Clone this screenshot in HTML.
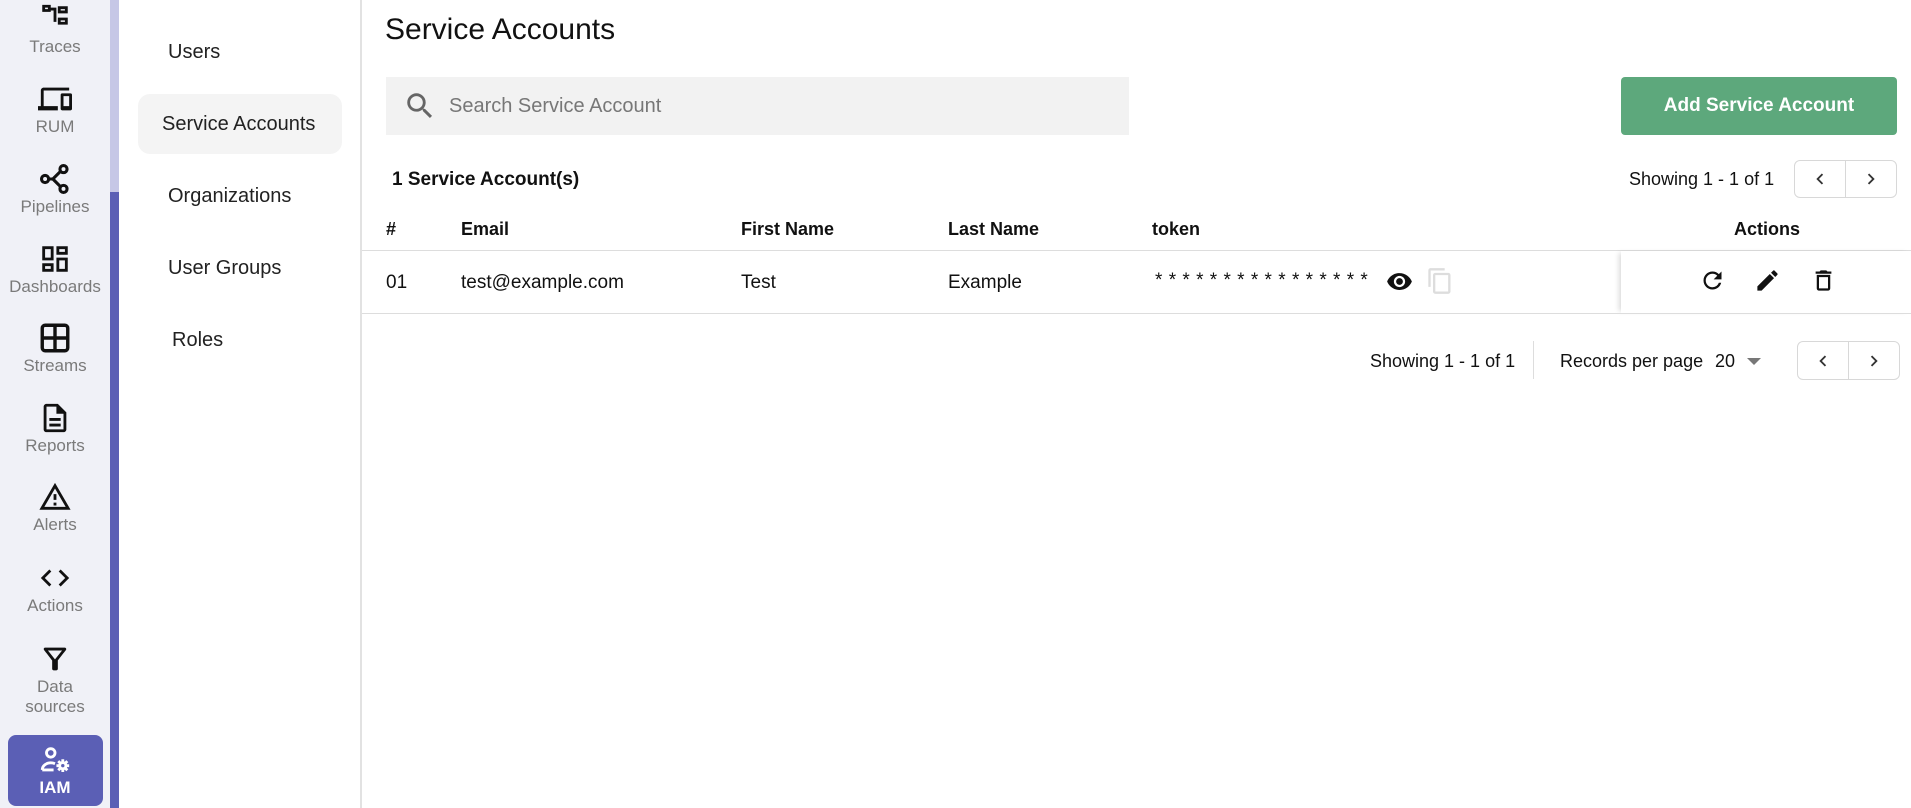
<!DOCTYPE html>
<html><head><meta charset="utf-8"><style>
*{margin:0;padding:0;box-sizing:border-box}
body{width:1911px;height:808px;overflow:hidden;background:#fff;font-family:"Liberation Sans",sans-serif;color:#111;position:relative}
.abs{position:absolute}
.rail{left:0;top:0;width:110px;height:808px;background:#f0f1f7}
.sb1{left:110px;top:0;width:9px;height:192px;background:#c6c7e6}
.sb2{left:110px;top:192px;width:9px;height:616px;background:#5b5fb5}
.ri{position:absolute;left:0;width:110px;text-align:center;color:#7a7a7a;font-size:17px;line-height:20px}
.ri svg{display:block;margin:0 auto 1px;width:34px;height:34px}
.sub{left:119px;top:0;width:243px;height:808px;border-right:2px solid #e2e2e2}
.si{position:absolute;font-size:20px;color:#222}
.th{position:absolute;top:219px;font-size:18px;font-weight:bold}
.td{position:absolute;top:272px;font-size:19px}
.pg{position:absolute;border:1px solid #d8d8d8;border-radius:6px;display:flex}
.pg div{flex:1;display:flex;align-items:center;justify-content:center}
.pg div:first-child{border-right:1px solid #d8d8d8}
</style></head><body>
<div class="abs rail"></div>
<div class="abs sb1"></div><div class="abs sb2"></div>

<div class="ri" style="top:2px"><svg viewBox="0 0 24 24"><path fill="#111" d="M3 2h6v5H3zM5 4v1h2V4zM14 3h7v5h-7zM16 5v1h3V5zM14 11h7v5h-7zM16 13v1h3v-1zM9 4h3v2H9zM11 4h2v10h-2z"/></svg>Traces</div>
<div class="ri" style="top:82px"><svg viewBox="0 0 24 24"><path fill="#111" d="M4 6h18V4H4c-1.1 0-2 .9-2 2v11H0v3h14v-3H4V6zm19 2h-6c-.55 0-1 .45-1 1v10c0 .55.45 1 1 1h6c.55 0 1-.45 1-1V9c0-.55-.45-1-1-1zm-1 9h-4v-7h4v7z"/></svg>RUM</div>
<div class="ri" style="top:162px"><svg viewBox="0 0 24 24"><g fill="none" stroke="#111" stroke-width="2.2"><circle cx="5" cy="12" r="2.5"/><circle cx="18" cy="5" r="2.5"/><circle cx="18" cy="19" r="2.5"/><path d="M7.5 12h3l5.5-5.5M10.5 12l5.5 5.5"/></g></svg>Pipelines</div>
<div class="ri" style="top:242px"><svg viewBox="0 0 24 24"><path fill="#111" d="M19 5v2h-4V5h4M9 5v6H5V5h4m10 8v6h-4v-6h4M9 17v2H5v-2h4M21 3h-8v6h8V3zM11 3H3v10h8V3zm10 8h-8v10h8V11zm-10 4H3v6h8v-6z"/></svg>Dashboards</div>
<div class="ri" style="top:321px"><svg viewBox="0 0 24 24"><g fill="none" stroke="#111" stroke-width="2.4"><rect x="3" y="3" width="18" height="18" rx="2"/><path d="M12 3v18M3 12h18"/></g></svg>Streams</div>
<div class="ri" style="top:401px"><svg viewBox="0 0 24 24"><path fill="#111" d="M8 16h8v2H8zm0-4h8v2H8zm6-10H6c-1.1 0-2 .9-2 2v16c0 1.1.89 2 1.99 2H18c1.1 0 2-.9 2-2V8l-6-6zm4 18H6V4h7v5h5v11z"/></svg>Reports</div>
<div class="ri" style="top:480px"><svg viewBox="0 0 24 24"><path fill="#111" d="M1 21h22L12 2 1 21zm3.47-2L12 5.99 19.53 19H4.47zM11 16h2v2h-2zm0-6h2v4h-2z"/></svg>Alerts</div>
<div class="ri" style="top:561px"><svg viewBox="0 0 24 24"><path fill="#111" d="M9.4 16.6L4.8 12l4.6-4.6L8 6l-6 6 6 6 1.4-1.4zm5.2 0l4.6-4.6-4.6-4.6L16 6l6 6-6 6-1.4-1.4z"/></svg>Actions</div>
<div class="ri" style="top:642px"><svg viewBox="0 0 24 24"><path fill="#111" d="M7 6h10l-5.01 6.3L7 6zm-2.75-.39C6.27 8.2 10 13 10 13v6c0 .55.45 1 1 1h2c.55 0 1-.45 1-1v-6s3.72-4.8 5.74-7.39A.998.998 0 0018.95 4H5.04c-.83 0-1.3.95-.79 1.61z"/></svg>Data<br>sources</div>
<div class="abs" style="left:8px;top:735px;width:95px;height:71px;background:#5b5fb5;border-radius:8px"></div>
<div class="ri" style="top:743px;color:#fff;font-weight:bold"><svg viewBox="0 0 24 24"><g fill="none" stroke="#fff" stroke-width="2"><circle cx="9" cy="7" r="3"/><path d="M3 19c0-3 3-5 6-5 1 0 2 .2 3 .6M3 19h8"/><circle cx="17.5" cy="16" r="2.2"/><path d="M17.5 11.5v2M17.5 18.5v2M13 16h2M20 16h2M14.3 12.8l1.4 1.4M19.3 17.8l1.4 1.4M14.3 19.2l1.4-1.4M19.3 14.2l1.4-1.4"/></g></svg>IAM</div>

<div class="abs sub"></div>
<div class="si" style="left:168px;top:41px">Users</div>
<div class="abs" style="left:138px;top:94px;width:204px;height:60px;background:#f4f4f4;border-radius:12px"></div>
<div class="si" style="left:162px;top:113px">Service Accounts</div>
<div class="si" style="left:168px;top:185px">Organizations</div>
<div class="si" style="left:168px;top:257px">User Groups</div>
<div class="si" style="left:172px;top:329px">Roles</div>

<div class="abs" style="left:385px;top:13px;font-size:30px">Service Accounts</div>
<div class="abs" style="left:386px;top:77px;width:743px;height:58px;background:#f2f2f2"></div>
<svg class="abs" style="left:403px;top:89px" width="34" height="34" viewBox="0 0 24 24"><path fill="#666" d="M15.5 14h-.79l-.28-.27A6.471 6.471 0 0016 9.5 6.5 6.5 0 109.5 16c1.61 0 3.09-.59 4.23-1.57l.27.28v.79l5 4.99L20.49 19l-4.99-5zm-6 0C7.01 14 5 11.99 5 9.5S7.01 5 9.5 5 14 7.01 14 9.5 11.99 14 9.5 14z"/></svg>
<div class="abs" style="left:449px;top:95px;font-size:20px;color:#777">Search Service Account</div>
<div class="abs" style="left:1621px;top:77px;width:276px;height:58px;background:#5da87c;border-radius:4px;color:#fff;font-weight:bold;font-size:19px;display:flex;align-items:center;justify-content:center">Add Service Account</div>

<div class="abs" style="left:392px;top:169px;font-size:19px;font-weight:bold">1 Service Account(s)</div>
<div class="abs" style="left:1629px;top:169px;font-size:18px">Showing 1 - 1 of 1</div>
<div class="pg" style="left:1794px;top:160px;width:103px;height:38px"><div><svg width="22" height="22" viewBox="0 0 24 24"><path fill="#333" d="M15.41 7.41L14 6l-6 6 6 6 1.41-1.41L10.83 12z"/></svg></div><div><svg width="22" height="22" viewBox="0 0 24 24"><path fill="#333" d="M10 6L8.59 7.41 13.17 12l-4.58 4.59L10 18l6-6z"/></svg></div></div>

<div class="th" style="left:386px">#</div>
<div class="th" style="left:461px">Email</div>
<div class="th" style="left:741px">First Name</div>
<div class="th" style="left:948px">Last Name</div>
<div class="th" style="left:1152px">token</div>
<div class="th" style="left:1734px">Actions</div>
<div class="abs" style="left:362px;top:250px;width:1549px;height:1px;background:#ddd"></div>
<div class="abs" style="left:1621px;top:251px;width:290px;height:62px;background:#fff;box-shadow:-4px 0 5px -2px rgba(0,0,0,.15)"></div>
<div class="td" style="left:386px">01</div>
<div class="td" style="left:461px">test@example.com</div>
<div class="td" style="left:741px">Test</div>
<div class="td" style="left:948px">Example</div>
<div class="td" style="left:1155px;top:270px;font-size:19px;letter-spacing:6.3px">****************</div>
<svg class="abs" style="left:1386px;top:268px" width="27" height="27" viewBox="0 0 24 24"><path fill="#111" d="M12 4.5C7 4.5 2.73 7.61 1 12c1.73 4.39 6 7.5 11 7.5s9.27-3.11 11-7.5c-1.73-4.39-6-7.5-11-7.5zM12 17c-2.76 0-5-2.240-5-5s2.24-5 5-5 5 2.24 5 5-2.24 5-5 5zm0-8c-1.66 0-3 1.34-3 3s1.34 3 3 3 3-1.34 3-3-1.340-3-3-3z"/></svg>
<svg class="abs" style="left:1426px;top:267px" width="28" height="28" viewBox="0 0 24 24"><path fill="#ddd" d="M16 1H4c-1.1 0-2 .9-2 2v14h2V3h12V1zm3 4H8c-1.1 0-2 .9-2 2v14c0 1.1.9 2 2 2h11c1.1 0 2-.9 2-2V7c0-1.1-.9-2-2-2zm0 16H8V7h11v14z"/></svg>
<svg class="abs" style="left:1699px;top:267px" width="27" height="27" viewBox="0 0 24 24"><path fill="#111" d="M17.65 6.35A7.958 7.958 0 0012 4c-4.42 0-7.99 3.58-7.99 8s3.57 8 7.99 8c3.73 0 6.84-2.55 7.73-6h-2.08A5.99 5.99 0 0112 18c-3.31 0-6-2.69-6-6s2.69-6 6-6c1.66 0 3.14.69 4.22 1.78L13 11h7V4l-2.35 2.35z"/></svg>
<svg class="abs" style="left:1754px;top:267px" width="27" height="27" viewBox="0 0 24 24"><path fill="#111" d="M3 17.25V21h3.75L17.81 9.94l-3.75-3.75L3 17.25zM20.71 7.04a.996.996 0 000-1.41l-2.34-2.34a.996.996 0 00-1.41 0l-1.83 1.83 3.75 3.75 1.83-1.83z"/></svg>
<svg class="abs" style="left:1810px;top:267px" width="27" height="27" viewBox="0 0 24 24"><path fill="#111" d="M6 19c0 1.1.9 2 2 2h8c1.1 0 2-.9 2-2V7H6v12zm2-10h8v10H8V9zM19 4h-3.5l-1-1h-5l-1 1H5v2h14V4z"/></svg>
<div class="abs" style="left:362px;top:313px;width:1549px;height:1px;background:#ddd"></div>

<div class="abs" style="left:1370px;top:351px;font-size:18px">Showing 1 - 1 of 1</div>
<div class="abs" style="left:1533px;top:341px;width:1px;height:38px;background:#ddd"></div>
<div class="abs" style="left:1560px;top:351px;font-size:18px">Records per page</div>
<div class="abs" style="left:1715px;top:351px;font-size:18px">20</div>
<div class="abs" style="left:1747px;top:358px;width:0;height:0;border-left:7px solid transparent;border-right:7px solid transparent;border-top:7px solid #777"></div>
<div class="pg" style="left:1797px;top:341px;width:103px;height:39px"><div><svg width="22" height="22" viewBox="0 0 24 24"><path fill="#333" d="M15.41 7.41L14 6l-6 6 6 6 1.41-1.41L10.83 12z"/></svg></div><div><svg width="22" height="22" viewBox="0 0 24 24"><path fill="#333" d="M10 6L8.59 7.41 13.17 12l-4.58 4.59L10 18l6-6z"/></svg></div></div>
</body></html>
